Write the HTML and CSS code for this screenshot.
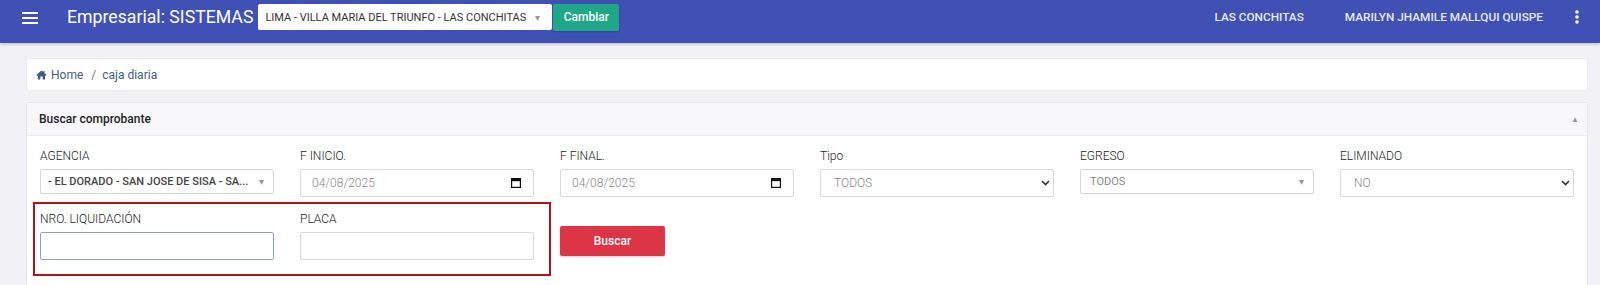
FILE: index.html
```html
<!DOCTYPE html>
<html lang="es">
<head>
    <meta charset="UTF-8">
    <meta name="viewport" content="width=device-width, initial-scale=1.0">
    <title>Caja diaria</title>
    <link rel="stylesheet" href="styles.css">
</head>
<body>
    <header class="topbar">
        <button class="menu-btn" aria-label="menu">
            <svg width="16" height="12" viewBox="0 0 16 12"><rect y="0" width="16" height="2"/><rect y="5" width="16" height="2"/><rect y="10" width="16" height="2"/></svg>
        </button>
        <span class="brand">Empresarial: SISTEMAS</span>
        <div class="site-select">
            <span>LIMA - VILLA MARIA DEL TRIUNFO - LAS CONCHITAS</span>
            <span class="tri">&#9662;</span>
        </div>
        <button class="btn btn-green">Cambiar</button>
        <nav class="top-right">
            <a href="#">LAS CONCHITAS</a>
            <a href="#">MARILYN JHAMILE MALLQUI QUISPE</a>
            <button class="more-btn" aria-label="mas">
                <svg width="4" height="14" viewBox="0 0 4 14"><circle cx="2" cy="2" r="1.8"/><circle cx="2" cy="7" r="1.8"/><circle cx="2" cy="12" r="1.8"/></svg>
            </button>
        </nav>
    </header>

    <main class="page">
        <div class="breadcrumb">
            <a href="#" class="crumb">
                <svg width="11" height="10" viewBox="0 0 11 10"><path d="M5.5 0.5 L0.3 5 L1.2 5.9 L1.9 5.3 V9.6 H4.3 V6.6 H6.7 V9.6 H9.1 V5.3 L9.8 5.9 L10.7 5 L8.6 3.2 V1 H7.4 V2.1 Z"/></svg>
                Home
            </a>
            <span class="sep">/</span>
            <span class="crumb">caja diaria</span>
        </div>

        <section class="card">
            <div class="card-header">
                <span>Buscar comprobante</span>
                <span class="collapse">&#9650;</span>
            </div>
            <div class="card-body">
                <div class="form-grid">
                    <div class="field">
                        <label>AGENCIA</label>
                        <div class="sel2 dark"><span>- EL DORADO - SAN JOSE DE SISA - SA...</span><span class="tri">&#9662;</span></div>
                    </div>
                    <div class="field">
                        <label>F INICIO.</label>
                        <div class="date">
                            <input class="inp" type="text" value="04/08/2025" readonly>
                            <svg class="cal" width="10" height="10" viewBox="0 0 10 10"><rect x="0.6" y="0.6" width="8.8" height="8.8" fill="none" stroke="#111" stroke-width="1.2"/><rect x="0.6" y="0.6" width="8.8" height="2.6" fill="#111"/></svg>
                        </div>
                    </div>
                    <div class="field">
                        <label>F FINAL.</label>
                        <div class="date">
                            <input class="inp" type="text" value="04/08/2025" readonly>
                            <svg class="cal" width="10" height="10" viewBox="0 0 10 10"><rect x="0.6" y="0.6" width="8.8" height="8.8" fill="none" stroke="#111" stroke-width="1.2"/><rect x="0.6" y="0.6" width="8.8" height="2.6" fill="#111"/></svg>
                        </div>
                    </div>
                    <div class="field">
                        <label>Tipo</label>
                        <div class="native">
                            <select class="inp"><option>TODOS</option></select>
                            <svg class="chev" width="9" height="6" viewBox="0 0 9 6"><path d="M1 1 L4.5 4.5 L8 1" fill="none" stroke="#333" stroke-width="1.6"/></svg>
                        </div>
                    </div>
                    <div class="field">
                        <label>EGRESO</label>
                        <div class="sel2"><span>TODOS</span><span class="tri">&#9662;</span></div>
                    </div>
                    <div class="field">
                        <label>ELIMINADO</label>
                        <div class="native">
                            <select class="inp"><option>NO</option></select>
                            <svg class="chev" width="9" height="6" viewBox="0 0 9 6"><path d="M1 1 L4.5 4.5 L8 1" fill="none" stroke="#333" stroke-width="1.6"/></svg>
                        </div>
                    </div>

                    <div class="field row2 c1">
                        <label>NRO. LIQUIDACIÓN</label>
                        <input class="inp focus" type="text">
                    </div>
                    <div class="field row2 c2">
                        <label>PLACA</label>
                        <input class="inp" type="text">
                    </div>
                    <div class="field row2 c3">
                        <button class="btn btn-red">Buscar</button>
                    </div>
                    <div class="highlight"></div>
                </div>
            </div>
        </section>
    </main>
</body>
</html>
```

FILE: styles.css
```css
* {
    box-sizing: border-box;
}
body {
    margin: 0;
    background-color: #f2f2f4;
    font-family: Roboto, "Liberation Sans", sans-serif;
    color: #333;
}
button {
    font-family: inherit;
    border: none;
    background: none;
    padding: 0;
    cursor: pointer;
}

/* top bar */
.topbar {
    height: 43px;
    padding: 0 21px 9px 22px;
    background-color: #3f51b5;
    display: flex;
    align-items: center;
    box-shadow: 0 1px 3px rgba(0, 0, 0, 0.25);
    color: #fff;
}
.menu-btn {
    display: flex;
    fill: #fff;
    margin-top: 1px;
}
.brand {
    margin-left: 29px;
    font-size: 17.7px;
    font-weight: 400;
    white-space: nowrap;
}
.site-select {
    margin-left: 5px;
    width: 294px;
    height: 26px;
    background-color: #fff;
    border-radius: 2px;
    color: #333;
    font-size: 11px;
    display: flex;
    align-items: center;
    justify-content: space-between;
    padding: 0 12px 0 7px;
}
.tri {
    color: #999;
    font-size: 10px;
}
.btn {
    border-radius: 2px;
    color: #fff;
    font-weight: 500;
    font-size: 12px;
}
.btn-green {
    margin-left: 1px;
    width: 66px;
    height: 27px;
    background-color: #1fa888;
    box-shadow: 0 1px 2px rgba(0, 0, 0, 0.2);
}
.top-right {
    margin-left: auto;
    display: flex;
    align-items: center;
    gap: 41px;
}
.top-right a {
    color: #e8eaf6;
    text-decoration: none;
    font-size: 11.8px;
    font-weight: 500;
}
.more-btn {
    display: flex;
    fill: #fff;
    margin-left: -9px;
}

/* content */
.page {
    padding: 15px 12px 0 26px;
}
.breadcrumb {
    height: 33px;
    background-color: #fff;
    border: 1px solid #ececef;
    border-radius: 3px;
    display: flex;
    align-items: center;
    padding-left: 9px;
    font-size: 12px;
}
.crumb {
    color: #3e5c86;
    text-decoration: none;
    display: flex;
    align-items: center;
    gap: 4px;
}
.crumb svg {
    fill: #3e5c86;
}
.sep {
    color: #777;
    margin: 0 6px 0 8px;
}
.card {
    margin-top: 11px;
    background-color: #fff;
    border: 1px solid #e6e6ea;
    border-radius: 3px;
}
.card-header {
    height: 33px;
    background-color: #f8f8fb;
    border-bottom: 1px solid #ebebf0;
    display: flex;
    align-items: center;
    justify-content: space-between;
    padding: 0 8px 0 12px;
    font-size: 12px;
    font-weight: 500;
    color: #222;
}
.collapse {
    color: #999;
    font-size: 8px;
}
.card-body {
    padding: 13px 13px 40px;
}
.form-grid {
    display: grid;
    grid-template-columns: repeat(6, 1fr);
    column-gap: 26px;
    row-gap: 15px;
}
.field label {
    display: block;
    font-size: 12px;
    font-weight: 300;
    line-height: 14px;
    margin-bottom: 6px;
    color: #222;
}
.row2 {
    grid-row: 2;
}
.c1 {
    grid-column: 1;
}
.c2 {
    grid-column: 2;
}
.c3 {
    grid-column: 3;
}
.inp {
    width: 100%;
    height: 28px;
    border: 1px solid #d9d9dc;
    border-radius: 2px;
    background-color: #fff;
    padding: 0 11px;
    font-family: inherit;
    font-size: 12px;
    font-weight: 300;
    color: #888;
    outline: none;
}
.inp.focus {
    border-color: #88a8b8;
}
.date,
.native {
    position: relative;
}
.native select {
    appearance: none;
    padding-left: 13px;
}
.cal {
    position: absolute;
    right: 13px;
    top: 9px;
}
.chev {
    position: absolute;
    right: 4px;
    top: 11px;
}
.sel2 {
    height: 25px;
    border: 1px solid #d6d6da;
    border-radius: 2px;
    display: flex;
    align-items: center;
    justify-content: space-between;
    padding: 0 9px 0 9px;
    font-size: 11px;
    color: #888;
}
.sel2.dark {
    color: #444;
    font-weight: 500;
    padding-left: 7px;
}
.btn-red {
    margin-top: 14px;
    width: 105px;
    height: 30px;
    background-color: #dc3545;
    box-shadow: 0 1px 2px rgba(0, 0, 0, 0.2);
}
.highlight {
    grid-row: 2;
    grid-column: 1 / 3;
    margin: -10px -17px -16px -7px;
    border: 2px solid #b3121c;
    pointer-events: none;
}
```
